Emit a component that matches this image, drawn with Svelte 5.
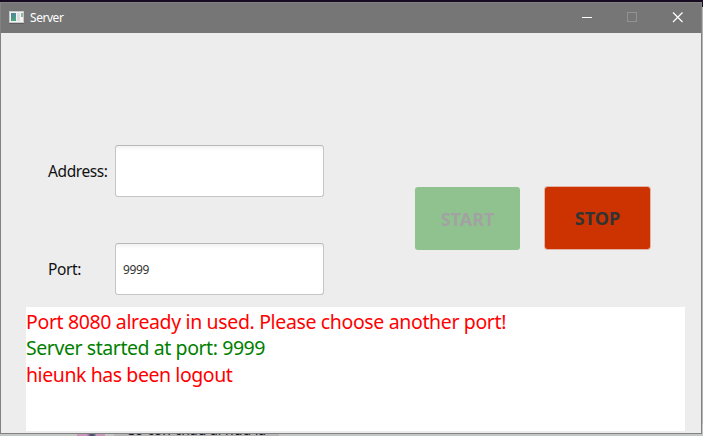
<script>
  let address = $state('');
  let port = $state('9999');
  const logs = [
    { text: 'Port 8080 already in used. Please choose another port!', kind: 'error notice' },
    { text: 'Server started at port: 9999', kind: 'ok' },
    { text: 'hieunk has been logout', kind: 'error' }
  ];
</script>

<div class="desktop">
  <div class="behind">
    <span class="avatar"></span>
    <span class="bubble">Có con cháu ai nữa là</span>
  </div>
  <section class="window">
    <header>
      <svg class="app-icon" width="16" height="14" viewBox="0 0 16 14">
        <rect x="0.5" y="0.5" width="14" height="11" fill="#f4f4f4" stroke="#c8c8c8" />
        <defs>
          <linearGradient id="screen" x1="0" y1="0" x2="0.5" y2="1">
            <stop offset="0" stop-color="#527ba5" />
            <stop offset="1" stop-color="#4ba77b" />
          </linearGradient>
        </defs>
        <rect x="2" y="2" width="5" height="8" fill="url(#screen)" />
        <rect x="8" y="2" width="3" height="8" fill="#dedede" />
        <rect x="12" y="2" width="2" height="4" fill="#8eb3aa" />
        <path d="M0 12.5h15" stroke="#5e5e5e" />
      </svg>
      <span class="title">Server</span>
      <div class="controls">
        <svg width="45" height="30" viewBox="0 0 45 30"><path d="M17 14.5h10" stroke="#fff" /></svg>
        <svg width="45" height="30" viewBox="0 0 45 30"><rect x="17.5" y="9.5" width="9" height="9" fill="none" stroke="#929292" /></svg>
        <svg width="45" height="30" viewBox="0 0 45 30"><path d="M18 9.5l9.5 9.5M27.5 9.5L18 19" stroke="#fff" stroke-width="1.2" fill="none" /></svg>
      </div>
    </header>
    <main>
      <div class="form">
        <div class="fields">
          <label><span class="address">Address:</span><input bind:value={address} /></label>
          <label><span class="port">Port:</span><input bind:value={port} /></label>
        </div>
        <div class="actions">
          <button class="start" disabled>START</button>
          <button class="stop">STOP</button>
        </div>
      </div>
      <div class="log">
        {#each logs as log}
          <div><span class={log.kind}>{log.text}</span></div>
        {/each}
      </div>
    </main>
  </section>
</div>

<style>
  .desktop {
    position: relative;
    box-sizing: border-box;
    width: 703px;
    height: 436px;
    padding-top: 2px;
    overflow: hidden;
    background: linear-gradient(#170b22 0 7px, #b5b5b5 7px);
    font-family: 'Noto Sans', sans-serif;
  }
  .window {
    position: relative;
    box-sizing: border-box;
    width: 702px;
    height: 432px;
    border: 1px solid #828282;
    background: #ededed;
    display: flex;
    flex-direction: column;
  }
  header {
    height: 30px;
    flex: none;
    display: flex;
    align-items: center;
    background: #767676;
    color: #fff;
  }
  .app-icon { margin: 0 5px 0 8px; }
  .title { font-size: 12px; letter-spacing: -0.45px; margin-top: -2px; }
  .controls { display: flex; margin: 0 1px 0 auto; }
  .controls svg { display: block; }
  main { flex: 1; }
  .form { height: 274px; display: flex; }
  .fields { width: 414px; padding-top: 112px; display: flex; flex-direction: column; gap: 46px; }
  label { height: 52px; padding-left: 47px; display: flex; align-items: center; color: #111; }
  label span { width: 67px; font-size: 15.5px; letter-spacing: -0.4px; white-space: nowrap; }
  input {
    box-sizing: border-box;
    width: 209px;
    height: 52px;
    margin: 0;
    padding: 0 7px;
    border: 1px solid #c5c5c5;
    border-top-color: #b8b8b8;
    border-radius: 3px;
    outline: none;
    background: linear-gradient(#f2f2f2, #fff 5px);
    color: #333;
    font: 12px 'Noto Sans', sans-serif;
    letter-spacing: -0.4px;
  }
  .actions { display: flex; align-items: flex-start; gap: 24px; padding-top: 153px; }
  button {
    box-sizing: border-box;
    padding: 0;
    border: 0;
    border-radius: 3px;
    font: 700 18px 'Noto Sans', sans-serif;
  }
  .start { width: 105px; height: 63px; margin-top: 1px; background: #90c290; color: #a2a2a2; }
  .stop { width: 107px; height: 64px; border: 1px solid #e3b5a8; background: #cc3300; background-clip: padding-box; color: #333; }
  .log {
    box-sizing: border-box;
    width: 659px;
    height: 124px;
    margin-left: 25px;
    padding-top: 2px;
    background: #fff;
    font-size: 19.5px;
    letter-spacing: -0.43px;
    line-height: 26.5px;
    white-space: nowrap;
  }
  .log div { height: 26.4px; }
  .error { color: #ff0000; }
  .notice { letter-spacing: -0.36px; }
  .ok { color: #008000; }
  .behind {
    position: absolute;
    left: 0;
    top: 424px;
    width: 703px;
    height: 12px;
    background: #c4c8c5;
  }
  .avatar {
    position: absolute;
    left: 77px;
    top: 0;
    width: 28px;
    height: 12px;
    background: linear-gradient(90deg, #c896b8 35%, #554078 50%, #356b62 60%, #c896b8 70%);
  }
  .bubble {
    position: absolute;
    left: 114px;
    top: -4px;
    width: 153px;
    padding-left: 12px;
    background: #b5b5b5;
    color: #151525;
    font-size: 14px;
    line-height: 20px;
    white-space: nowrap;
  }
</style>
